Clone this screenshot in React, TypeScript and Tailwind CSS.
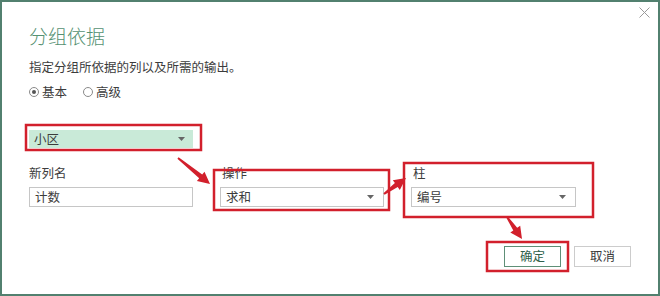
import React from "react";

// Red annotation arrow: tapered shaft + triangle head, drawn from (x1,y1) to tip (x2,y2).
function arrowPoints(x1: number, y1: number, x2: number, y2: number) {
  const dx = x2 - x1;
  const dy = y2 - y1;
  const len = Math.hypot(dx, dy);
  const ux = dx / len;
  const uy = dy / len;
  const nx = -uy;
  const ny = ux;
  const head = 12;
  const hw = 6;
  const bx = x2 - ux * head;
  const by = y2 - uy * head;
  const s0 = 1;
  const s1 = 2.4;
  const pts = [
    [x1 + nx * s0, y1 + ny * s0],
    [bx + nx * s1, by + ny * s1],
    [bx + nx * hw, by + ny * hw],
    [x2, y2],
    [bx - nx * hw, by - ny * hw],
    [bx - nx * s1, by - ny * s1],
    [x1 - nx * s0, y1 - ny * s0],
  ];
  return pts.map((p) => `${p[0].toFixed(1)},${p[1].toFixed(1)}`).join(" ");
}

function Caret() {
  return (
    <svg width="7" height="4" viewBox="0 0 7 4" className="shrink-0">
      <path d="M0 0h7L3.5 4z" fill="#666" />
    </svg>
  );
}

function Select({ value, className = "" }: { value: string; className?: string }) {
  return (
    <div
      className={`flex h-[20px] items-center justify-between border border-[#c6c6c6] bg-white pl-[5px] pr-[9px] text-[12.5px] text-[#3c3c3c] ${className}`}
    >
      <span>{value}</span>
      <Caret />
    </div>
  );
}

export default function App() {
  const red = "#d2202c";
  return (
    <div className="relative h-[296px] w-[660px] bg-white font-['Noto_Sans_CJK_SC',sans-serif]">
      <div className="flex h-full w-full flex-col border-2 border-[#52806f] pl-[27px] pr-[27px] pt-[21px]">
        {/* close */}
        <svg width="11" height="11" viewBox="0 0 11 11" className="absolute left-[639px] top-[7px]">
          <path d="M0.5 0.5l10 10M10.5 0.5l-10 10" stroke="#9a9a9a" strokeWidth="1" />
        </svg>

        <h1 className="text-[19px] font-light leading-[26px] text-[#559172]">分组依据</h1>
        <p className="mt-[9px] text-[12.5px] leading-[18px] text-[#3c3c3c]">指定分组所依据的列以及所需的输出。</p>

        <div className="mt-[7px] flex items-center text-[12.5px] leading-[18px] text-[#3c3c3c]">
          <span className="grid h-[10px] w-[10px] place-items-center rounded-full border border-[#8a8a8a]">
            <span className="h-[4px] w-[4px] rounded-full bg-[#555]" />
          </span>
          <span className="ml-[3px]">基本</span>
          <span className="ml-[16px] h-[10px] w-[10px] rounded-full border border-[#8a8a8a]" />
          <span className="ml-[3px]">高级</span>
        </div>

        <div className="mt-[29px] flex h-[18px] w-[164px] items-center justify-between bg-[#c9ead8] pl-[5px] pr-[8px] text-[12.5px] text-[#3c3c3c]">
          <span>小区</span>
          <Caret />
        </div>

        <div className="mt-[16px] grid grid-cols-[164px_164px_165px] gap-x-[27px] gap-y-[5px] text-[12.5px] leading-[18px] text-[#3c3c3c]">
          <span>新列名</span>
          <span className="pl-[2px]">操作</span>
          <span className="pl-[2px]">柱</span>
          <div className="flex h-[20px] items-center border border-[#c6c6c6] pl-[5px]">计数</div>
          <Select value="求和" />
          <Select value="编号" />
        </div>

        <div className="mt-[39px] flex justify-end gap-[13px] text-[12.5px]">
          <button className="h-[21px] w-[57px] border border-[#5e8f77] bg-white text-[#2f5f4a]">确定</button>
          <button className="h-[21px] w-[57px] border border-[#cccccc] bg-white text-[#3c3c3c]">取消</button>
        </div>
      </div>

      {/* annotation overlay: red frames and arrows */}
      <svg className="pointer-events-none absolute inset-0" width="660" height="296" viewBox="0 0 660 296">
        <g fill="none" stroke={red} strokeWidth="2.5">
          <rect x="26" y="125" width="175" height="25" />
          <rect x="214" y="170" width="175" height="40" />
          <rect x="404" y="163" width="189" height="54" />
          <rect x="487" y="242" width="81" height="29" />
        </g>
        <g fill={red}>
          <polygon points={arrowPoints(178, 158, 210, 184)} />
          <polygon points={arrowPoints(384, 194, 406, 178)} />
          <polygon points={arrowPoints(507, 217, 522, 239)} />
        </g>
      </svg>
    </div>
  );
}
